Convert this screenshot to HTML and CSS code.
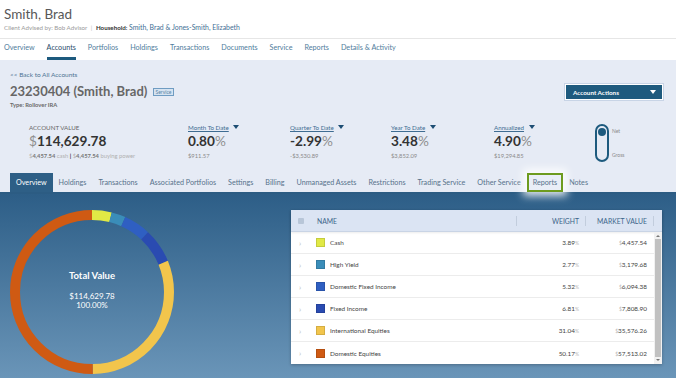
FILE: index.html
```html
<!DOCTYPE html>
<html lang="en">
<head>
    <meta charset="UTF-8">
    <meta name="viewport" content="width=device-width, initial-scale=1.0">
    <title>Smith, Brad - Accounts</title>
    <link rel="stylesheet" href="styles.css">
</head>
<body>

    <header class="client">
        <h1>Smith, Brad</h1>
        <p class="sub">Client Advised by: Bob Advisor <span class="pipe">|</span> <b>Household:</b> <a href="#">Smith, Brad &amp; Jones-Smith, Elizabeth</a></p>
    </header>

    <nav class="main">
        <a href="#">Overview</a>
        <a href="#" class="active">Accounts</a>
        <a href="#">Portfolios</a>
        <a href="#">Holdings</a>
        <a href="#">Transactions</a>
        <a href="#">Documents</a>
        <a href="#">Service</a>
        <a href="#">Reports</a>
        <a href="#">Details &amp; Activity</a>
    </nav>

    <section class="account">
        <div class="acct-head">
            <div>
                <a href="#" class="back">&lt;&lt; Back to All Accounts</a>
                <h2>23230404 (Smith, Brad) <span class="badge">Service</span></h2>
                <p class="type">Type: Rollover IRA</p>
            </div>
            <button class="actions">Account Actions <span class="caret white"></span></button>
        </div>

        <div class="stats">
            <div class="stat">
                <div class="label plain">ACCOUNT VALUE</div>
                <div class="value"><span class="cur">$</span>114,629.78</div>
                <div class="small"><span class="cur">$</span><b>4,457.54</b> <span class="lite">cash</span> <b class="dark">|</b> <span class="cur">$</span><b>4,457.54</b> <span class="lite">buying power</span></div>
            </div>
            <div class="stat">
                <div class="label"><u>Month To Date</u> <span class="caret"></span></div>
                <div class="value">0.80<span class="pct">%</span></div>
                <div class="small">$911.57</div>
            </div>
            <div class="stat">
                <div class="label"><u>Quarter To Date</u> <span class="caret"></span></div>
                <div class="value">-2.99<span class="pct">%</span></div>
                <div class="small">-$3,530.89</div>
            </div>
            <div class="stat">
                <div class="label"><u>Year To Date</u> <span class="caret"></span></div>
                <div class="value">3.48<span class="pct">%</span></div>
                <div class="small">$3,852.09</div>
            </div>
            <div class="stat">
                <div class="label"><u>Annualized</u> <span class="caret"></span></div>
                <div class="value">4.90<span class="pct">%</span></div>
                <div class="small">$19,294.85</div>
            </div>
            <div class="toggle">
                <div class="pill"><span class="dot"></span></div>
                <div class="opts">
                    <span>Net</span>
                    <span>Gross</span>
                </div>
            </div>
        </div>

        <div class="tabs">
            <a href="#" class="active">Overview</a>
            <a href="#">Holdings</a>
            <a href="#">Transactions</a>
            <a href="#">Associated Portfolios</a>
            <a href="#">Settings</a>
            <a href="#">Billing</a>
            <a href="#">Unmanaged Assets</a>
            <a href="#">Restrictions</a>
            <a href="#">Trading Service</a>
            <a href="#">Other Service</a>
            <a href="#" class="focus">Reports</a>
            <a href="#">Notes</a>
        </div>
    </section>

    <section class="overview">
        <div class="donut">
            <svg width="164" height="164" viewBox="0 0 164 164">
                <g transform="rotate(-90 82 82)" fill="none" stroke-width="10">
                    <circle cx="82" cy="82" r="77" pathLength="100" stroke="#e1e945" stroke-dasharray="3.89 96.11" stroke-dashoffset="0"/>
                    <circle cx="82" cy="82" r="77" pathLength="100" stroke="#3a8db9" stroke-dasharray="2.77 97.23" stroke-dashoffset="-3.89"/>
                    <circle cx="82" cy="82" r="77" pathLength="100" stroke="#2f5fc2" stroke-dasharray="5.32 94.68" stroke-dashoffset="-6.66"/>
                    <circle cx="82" cy="82" r="77" pathLength="100" stroke="#2a4bb1" stroke-dasharray="6.81 93.19" stroke-dashoffset="-11.98"/>
                    <circle cx="82" cy="82" r="77" pathLength="100" stroke="#f2c54c" stroke-dasharray="31.04 68.96" stroke-dashoffset="-18.79"/>
                    <circle cx="82" cy="82" r="77" pathLength="100" stroke="#cf5a13" stroke-dasharray="50.17 49.83" stroke-dashoffset="-49.83"/>
                </g>
            </svg>
            <div class="center">
                <div class="total">Total Value</div>
                <div>$114,629.78</div>
                <div>100.00%</div>
            </div>
        </div>

        <div class="panel">
            <div class="thead">
                <span class="cell icon"><i></i></span>
                <span class="cell name">NAME</span>
                <span class="cell num">WEIGHT</span>
                <span class="cell num">MARKET VALUE</span>
                <span class="cell"></span>
            </div>
            <div class="tbody">
                <div class="rows">
                    <div class="row">
                        <span class="chev">&rsaquo;</span>
                        <span class="name"><i class="sw" style="background:#e1e945"></i>Cash</span>
                        <span class="num">3.89<em>%</em></span>
                        <span class="num"><em>$</em>4,457.54</span>
                    </div>
                    <div class="row">
                        <span class="chev">&rsaquo;</span>
                        <span class="name"><i class="sw" style="background:#3a8db9"></i>High Yield</span>
                        <span class="num">2.77<em>%</em></span>
                        <span class="num"><em>$</em>3,179.68</span>
                    </div>
                    <div class="row">
                        <span class="chev">&rsaquo;</span>
                        <span class="name"><i class="sw" style="background:#2f5fc2"></i>Domestic Fixed Income</span>
                        <span class="num">5.32<em>%</em></span>
                        <span class="num"><em>$</em>6,094.38</span>
                    </div>
                    <div class="row">
                        <span class="chev">&rsaquo;</span>
                        <span class="name"><i class="sw" style="background:#2a4bb1"></i>Fixed Income</span>
                        <span class="num">6.81<em>%</em></span>
                        <span class="num"><em>$</em>7,808.90</span>
                    </div>
                    <div class="row">
                        <span class="chev">&rsaquo;</span>
                        <span class="name"><i class="sw" style="background:#f2c54c"></i>International Equities</span>
                        <span class="num">31.04<em>%</em></span>
                        <span class="num"><em>$</em>35,576.26</span>
                    </div>
                    <div class="row">
                        <span class="chev">&rsaquo;</span>
                        <span class="name"><i class="sw" style="background:#cf5a13"></i>Domestic Equities</span>
                        <span class="num">50.17<em>%</em></span>
                        <span class="num"><em>$</em>57,513.02</span>
                    </div>
                </div>
                <div class="scroll">
                    <span class="arr up"></span>
                    <span class="thumb"></span>
                    <span class="arr down"></span>
                </div>
            </div>
        </div>
    </section>

</body>
</html>
```

FILE: styles.css
```css
body {
    margin: 0;
    width: 676px;
    height: 380px;
    overflow: hidden;
    background: #fff;
    font-family: Lato, "Open Sans", sans-serif;
    color: #444;
}

a {
    text-decoration: none;
    color: inherit;
}

/* client header */
.client {
    height: 39px;
    box-sizing: border-box;
    padding: 5px 4px 0;
    border-bottom: 1px solid #e6e6e6;
}

.client h1 {
    margin: 0;
    font-size: 13.5px;
    line-height: 18px;
    font-weight: 400;
    color: #585858;
}

.client .sub {
    margin: 0;
    font-size: 6.2px;
    line-height: 8px;
    color: #9a9a9a;
}

.client .sub .pipe {
    margin: 0 2px;
    color: #bbb;
}

.client .sub b {
    color: #333;
}

.client .sub a {
    font-size: 6.9px;
    color: #3f6f95;
}

/* main nav */
.main {
    display: flex;
    gap: 12px;
    height: 21px;
    padding: 0 4px;
    font-size: 7.2px;
}

.main a {
    box-sizing: border-box;
    height: 21px;
    line-height: 18px;
    color: #4f7c9c;
    border-bottom: 3px solid transparent;
}

.main a.active {
    color: #2a4c6b;
    border-bottom-color: #1d5a7e;
}

/* account area */
.account {
    background: #e6ebf5;
    padding-top: 10px;
}

.acct-head {
    display: flex;
    justify-content: space-between;
    align-items: flex-start;
    padding: 0 13px 0 10px;
}

.back {
    display: block;
    font-size: 6.5px;
    line-height: 10px;
    color: #4d7494;
}

.acct-head h2 {
    margin: 3px 0 0;
    font-size: 13px;
    line-height: 16px;
    font-weight: 700;
    color: #666;
}

.badge {
    display: inline-block;
    vertical-align: 2px;
    margin-left: 2px;
    padding: 0 2px;
    font-size: 5px;
    line-height: 6px;
    font-weight: 400;
    color: #5a84a6;
    background: #d6e3f1;
    border: 1px solid #6f9cc2;
}

.type {
    margin: 2px 0 0;
    font-size: 5.8px;
    line-height: 8px;
    font-weight: 700;
    color: #6a6a6a;
}

.actions {
    margin-top: 14px;
    width: 98px;
    height: 16px;
    display: flex;
    align-items: center;
    justify-content: space-between;
    padding: 0 6px 0 7px;
    font-family: inherit;
    font-size: 6.3px;
    font-weight: 700;
    color: #fff;
    background: #1e5a7e;
    border: 1px solid #fff;
    box-shadow: 0 0 0 1px #c8d4e6;
}

.caret {
    display: inline-block;
    margin-left: 3px;
    vertical-align: 1px;
    border-left: 3px solid transparent;
    border-right: 3px solid transparent;
    border-top: 4px solid #1d4d73;
}

.caret.white {
    border-top-color: #fff;
}

/* stats */
.stats {
    display: grid;
    grid-template-columns: 159px 102px 101px 103px 101px 50px;
    padding-left: 29px;
    margin-top: 15px;
}

.label {
    font-size: 6.2px;
    line-height: 8px;
    color: #3e6c92;
}

.label.plain {
    color: #666;
}

.value {
    font-size: 13.6px;
    line-height: 18px;
    font-weight: 700;
    color: #333;
}

.value .cur,
.value .pct {
    font-weight: 400;
    color: #8e8e8e;
}

.small {
    margin-top: 2px;
    font-size: 5.8px;
    line-height: 8px;
    color: #8a8a8a;
}

.small b {
    color: #777;
}

.small .dark {
    color: #333;
}

.small .cur,
.small .lite {
    color: #b0b0b0;
}

.toggle {
    display: flex;
    gap: 3px;
}

.pill {
    box-sizing: border-box;
    width: 14px;
    height: 38px;
    border: 2px solid #1d5a7e;
    border-radius: 7px;
    padding: 2px 0 0 1px;
}

.dot {
    display: block;
    width: 8px;
    height: 8px;
    border-radius: 50%;
    background: #1d5a7e;
}

.opts {
    display: flex;
    flex-direction: column;
    justify-content: space-between;
    padding: 4px 0 4px;
    font-size: 5px;
    color: #8a8a8a;
}

/* tabs */
.tabs {
    display: flex;
    margin-top: 11px;
    padding-left: 10px;
    border-bottom: 2px solid #2c5c83;
}

.tabs a {
    height: 19px;
    line-height: 19px;
    padding: 0 6px;
    font-size: 7.2px;
    color: #57728b;
}

.tabs a.active {
    color: #fff;
    background: #2e5f86;
}

.tabs a.focus {
    outline: 2px solid #6d9b1f;
    outline-offset: -2px;
    background: #e9eef7;
    box-shadow: 0 0 8px 4px rgba(255, 255, 255, 0.85);
    position: relative;
}

/* overview */
.overview {
    height: 184px;
    display: flex;
    align-items: flex-start;
    gap: 117px;
    padding: 16px 0 0 10px;
    box-sizing: border-box;
    background: linear-gradient(#2d5e87, #6a95b8);
}

.donut {
    display: grid;
    place-items: center;
}

.donut svg,
.donut .center {
    grid-area: 1 / 1;
}

.center {
    text-align: center;
    color: #fff;
    font-size: 8px;
    line-height: 9px;
    padding-bottom: 5px;
}

.center .total {
    font-size: 9.5px;
    line-height: 12px;
    font-weight: 700;
    margin-bottom: 10px;
}

/* table panel */
.panel {
    width: 371px;
    background: #fff;
    box-shadow: 0 1px 3px rgba(0, 0, 0, 0.25);
}

.thead,
.row {
    display: grid;
    grid-template-columns: 22px 1fr 69px 68px;
    align-items: center;
}

.thead {
    grid-template-columns: 22px 1fr 69px 68px 8px;
    height: 21px;
    background: #dbe4f3;
    border-bottom: 1px solid #c9d4e5;
    box-shadow: 0 1px 2px rgba(0, 0, 0, 0.08);
    font-size: 6.8px;
    color: #3b648a;
}

.thead .cell {
    height: 10px;
    line-height: 10px;
    border-right: 1px solid #c2cddd;
}

.thead .icon,
.thead .cell:last-child {
    border-right: 0;
}

.thead .icon i {
    display: block;
    margin-left: 7px;
    width: 6px;
    height: 6px;
    margin-top: 2px;
    border-radius: 1px;
    background: #b8c6d8;
}

.thead .name {
    padding-left: 4px;
}

.thead .num {
    text-align: right;
    padding-right: 6px;
}

.tbody {
    display: flex;
    height: 132px;
}

.rows {
    flex: 1;
}

.row {
    box-sizing: border-box;
    height: 22px;
    border-bottom: 1px solid #ececec;
    font-size: 6.4px;
    color: #444;
}

.row:last-child {
    border-bottom: 0;
}

.chev {
    padding-left: 8px;
    color: #bbb;
    font-size: 8px;
}

.row .name {
    display: flex;
    align-items: center;
    gap: 5px;
    padding-left: 3px;
}

.sw {
    width: 9px;
    height: 9px;
    box-sizing: border-box;
    border: 1px solid rgba(0, 0, 0, 0.12);
}

.row .num {
    text-align: right;
    padding-right: 7px;
}

.row .num em {
    font-style: normal;
    font-size: 5px;
    color: #b5b5b5;
}

.scroll {
    width: 8px;
    display: flex;
    flex-direction: column;
    align-items: center;
    background: #f1f1f1;
}

.arr {
    margin: 3px 0 2px;
    border-left: 2px solid transparent;
    border-right: 2px solid transparent;
}

.arr.up {
    border-bottom: 2px solid #777;
}

.arr.down {
    border-top: 2px solid #777;
    margin: 2px 0 3px;
}

.thumb {
    flex: 1;
    width: 6px;
    background: #c1c1c1;
}
```
